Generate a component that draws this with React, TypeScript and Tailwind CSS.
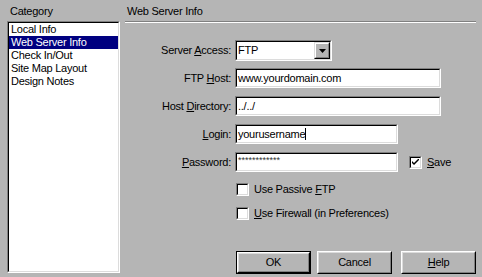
import type { ReactNode } from 'react'

const items = ['Local Info', 'Web Server Info', 'Check In/Out', 'Site Map Layout', 'Design Notes']

export default function App() {
  return (
    <div className="w-[482px] h-[277px] bg-[#b5b5b5] flex font-['Liberation_Sans',Arial,sans-serif] text-[11px] leading-[13px] tracking-[-0.25px] text-black overflow-hidden select-none">
      {/* category list */}
      <div className="w-[125px] shrink-0 pl-[7px] pt-[5px]">
        <div className="pl-[3px]">Category</div>
        <Sunken className="mt-[3px] w-[113px] h-[252px]" inner="bg-white">
          {items.map((it, i) => (
            <div
              key={it}
              className={`h-[13px] pl-[2px] whitespace-nowrap ${i === 1 ? 'bg-[#000080] text-white' : ''}`}
            >
              {it}
            </div>
          ))}
        </Sunken>
      </div>

      {/* settings panel */}
      <div className="flex-1 pr-[9px] pt-[5px]">
        <div className="pl-[2px]">Web Server Info</div>
        <div className="mt-[3px] h-[2px] border-t border-b border-t-[#808080] border-b-white" />

        <div className="mt-[17px] flex flex-col">
          <Row label={<>Server <U>A</U>ccess:</>}>
            <Sunken className="w-[97px] h-[21px]" inner="bg-white flex items-center">
              <span className="flex-1 pl-[1px]">FTP</span>
              <Raised className="w-[16px] h-[17px]" inner="flex items-center justify-center">
                <svg width="7" height="4" viewBox="0 0 7 4">
                  <polygon points="0,0 7,0 3.5,4" fill="#000" />
                </svg>
              </Raised>
            </Sunken>
          </Row>
          <Row label={<>FTP <U>H</U>ost:</>} className="mt-[7px]">
            <TextBox w="w-[206px]">www.yourdomain.com</TextBox>
          </Row>
          <Row label={<>Host <U>D</U>irectory:</>} className="mt-[8px]">
            <TextBox w="w-[206px]">../../</TextBox>
          </Row>
          <Row label={<><U>L</U>ogin:</>} className="mt-[8px]">
            <TextBox w="w-[163px]">
              yourusername
              <span className="inline-block w-[1px] h-[12px] bg-black align-middle -mt-[2px]" />
            </TextBox>
          </Row>
          <Row label={<><U>P</U>assword:</>} className="mt-[8px]">
            <TextBox w="w-[163px]">
              <span className="text-[9px] leading-[9px] align-top tracking-[0px] text-[#333]">************</span>
            </TextBox>
            <div className="ml-[11px] flex items-center gap-[5px]">
              <Check checked />
              <span>
                <U>S</U>ave
              </span>
            </div>
          </Row>

          <div className="mt-[11px] ml-[111px] flex items-center gap-[5px]">
            <Check />
            <span>
              Use Passive <U>F</U>TP
            </span>
          </div>
          <div className="mt-[11px] ml-[111px] flex items-center gap-[5px]">
            <Check />
            <span>
              <U>U</U>se Firewall (in Preferences)
            </span>
          </div>

          <div className="mt-[31px] ml-[111px] flex">
            <div className="border border-black">
              <Button w="w-[73px]" h="h-[21px]">OK</Button>
            </div>
            <div className="ml-[6px]">
              <Button>Cancel</Button>
            </div>
            <div className="ml-[9px]">
              <Button>
                <U>H</U>elp
              </Button>
            </div>
          </div>
        </div>
      </div>
    </div>
  )
}

function U({ children }: { children: ReactNode }) {
  return <span className="underline underline-offset-[1px]">{children}</span>
}

function Row({ label, children, className = '' }: { label: ReactNode; children: ReactNode; className?: string }) {
  return (
    <div className={`flex items-center ${className}`}>
      <div className="w-[106px] text-right whitespace-nowrap">{label}</div>
      <div className="ml-[4px] flex items-center">{children}</div>
    </div>
  )
}

function Sunken({ className = '', inner = '', children }: { className?: string; inner?: string; children?: ReactNode }) {
  return (
    <div className={`border border-t-[#808080] border-l-[#808080] border-r-white border-b-white ${className}`}>
      <div className={`w-full h-full border border-t-black border-l-black border-r-[#dcdcdc] border-b-[#dcdcdc] overflow-hidden ${inner}`}>
        {children}
      </div>
    </div>
  )
}

function Raised({ className = '', inner = '', children }: { className?: string; inner?: string; children?: ReactNode }) {
  return (
    <div className={`bg-[#b5b5b5] border border-t-[#dcdcdc] border-l-[#dcdcdc] border-r-black border-b-black ${className}`}>
      <div className={`w-full h-full border border-t-white border-l-white border-r-[#808080] border-b-[#808080] ${inner}`}>
        {children}
      </div>
    </div>
  )
}

function TextBox({ w, children }: { w: string; children: ReactNode }) {
  return (
    <Sunken className={`${w} h-[20px]`} inner="bg-white flex items-center pl-[1px] whitespace-nowrap">
      <span>{children}</span>
    </Sunken>
  )
}

function Check({ checked = false }: { checked?: boolean }) {
  return (
    <Sunken className="w-[13px] h-[13px] shrink-0" inner="bg-white flex items-center justify-center">
      {checked && (
        <svg width="7" height="7" viewBox="0 0 7 7">
          <path d="M0 2 L0 4 L2 6 L7 1 L7 -1 L2 4 Z" fill="#000" />
        </svg>
      )}
    </Sunken>
  )
}

function Button({ children, w = 'w-[75px]', h = 'h-[23px]' }: { children: ReactNode; w?: string; h?: string }) {
  return (
    <div className={`${w} ${h} bg-[#b5b5b5] border border-t-white border-l-white border-r-black border-b-black`}>
      <div className="w-full h-full border border-t-[#dcdcdc] border-l-[#dcdcdc] border-r-[#808080] border-b-[#808080] flex items-center justify-center">
        <span>{children}</span>
      </div>
    </div>
  )
}
